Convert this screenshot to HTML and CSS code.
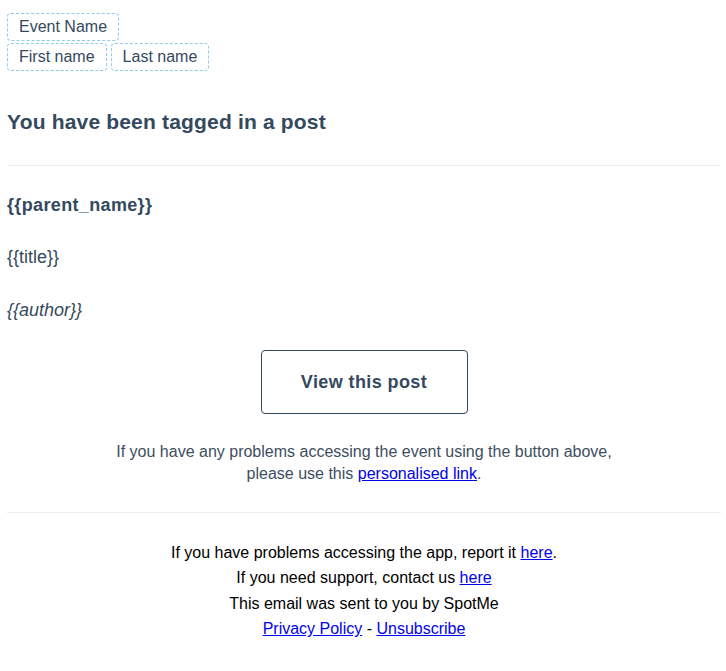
FILE: index.html
```html
<!DOCTYPE html>
<html>
<head>
<meta charset="utf-8">
<link rel="stylesheet" href="styles.css">
</head>
<body>
<div class="page">
  <div class="tags">
    <div class="tag-row"><span class="tag">Event Name</span></div>
    <div class="tag-row"><span class="tag">First name</span><span class="tag">Last name</span></div>
  </div>
  <h1 class="title">You have been tagged in a post</h1>
  <div class="rule rule-top"></div>
  <p class="line parent">{{parent_name}}</p>
  <p class="line item-title">{{title}}</p>
  <p class="line author">{{author}}</p>
  <div class="cta"><span class="button">View this post</span></div>
  <p class="help">If you have any problems accessing the event using the button above,<br>please use this <a href="#">personalised link</a>.</p>
  <div class="rule rule-bottom"></div>
  <div class="footer">
    <p>If you have problems accessing the app, report it <a href="#">here</a>.</p>
    <p>If you need support, contact us <a href="#">here</a></p>
    <p>This email was sent to you by SpotMe</p>
    <p><a href="#">Privacy Policy</a> - <a href="#">Unsubscribe</a></p>
  </div>
</div>
</body>
</html>
```
FILE: styles.css
```css
html, body {
  margin: 0;
  padding: 0;
  background: #fff;
}
body {
  font-family: "Liberation Sans", Arial, sans-serif;
  color: #34495e;
}
.page {
  margin-left: 7px;
  width: 714px;
  padding-top: 13px;
}
.tags {
  display: flex;
  flex-direction: column;
  gap: 2px;
}
.tag-row {
  display: flex;
  gap: 4px;
}
.tag {
  display: inline-block;
  border: 1px dashed #8fcbea;
  border-radius: 4px;
  padding: 4px 11px 4px 11px;
  font-size: 16px;
  line-height: 18px;
  color: #34495e;
}
.title {
  font-size: 21px;
  line-height: 24px;
  font-weight: bold;
  letter-spacing: 0.18px;
  margin: 39px 0 0 0;
  color: #34495e;
}
.rule {
  height: 1px;
  background: #ececec;
}
.rule-top {
  margin-top: 31px;
}
.line {
  font-size: 18px;
  line-height: 22px;
  margin: 0;
}
.parent {
  font-weight: bold;
  letter-spacing: 0.35px;
  margin-top: 28px;
}
.item-title {
  margin-top: 30px;
}
.author {
  font-style: italic;
  margin-top: 31px;
}
.cta {
  display: flex;
  justify-content: center;
  margin-top: 29px;
}
.button {
  display: flex;
  align-items: center;
  justify-content: center;
  box-sizing: border-box;
  width: 207px;
  height: 64px;
  border: 1px solid #34495e;
  border-radius: 4px;
  font-size: 18px;
  font-weight: bold;
  letter-spacing: 0.4px;
  color: #34495e;
}
.help {
  text-align: center;
  font-size: 16px;
  line-height: 22px;
  margin: 27px 0 0 0;
  color: #3d4e60;
}
a {
  color: #0000ee;
  text-decoration: underline;
}
.rule-bottom {
  margin-top: 27px;
}
.footer {
  padding-top: 27px;
  text-align: center;
  color: #000;
  font-size: 16px;
  line-height: 25.4px;
}
.footer p {
  margin: 0;
}
```
